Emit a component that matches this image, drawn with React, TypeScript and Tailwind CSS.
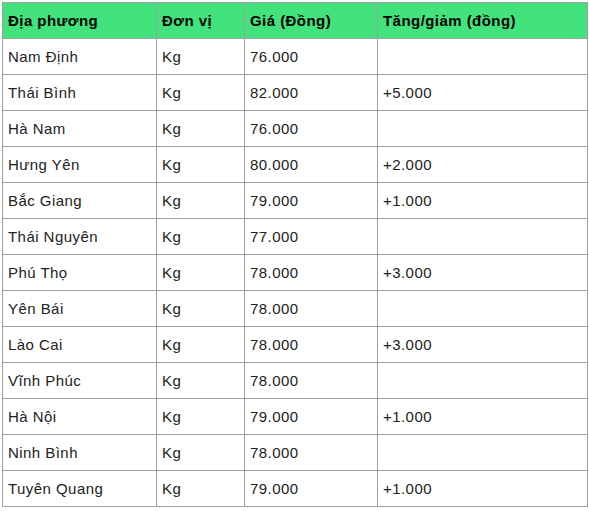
import React from "react";

const rows: [string, string, string, string][] = [
  ["Nam Định", "Kg", "76.000", ""],
  ["Thái Bình", "Kg", "82.000", "+5.000"],
  ["Hà Nam", "Kg", "76.000", ""],
  ["Hưng Yên", "Kg", "80.000", "+2.000"],
  ["Bắc Giang", "Kg", "79.000", "+1.000"],
  ["Thái Nguyên", "Kg", "77.000", ""],
  ["Phú Thọ", "Kg", "78.000", "+3.000"],
  ["Yên Bái", "Kg", "78.000", ""],
  ["Lào Cai", "Kg", "78.000", "+3.000"],
  ["Vĩnh Phúc", "Kg", "78.000", ""],
  ["Hà Nội", "Kg", "79.000", "+1.000"],
  ["Ninh Bình", "Kg", "78.000", ""],
  ["Tuyên Quang", "Kg", "79.000", "+1.000"],
];

export default function App() {
  const cell = "border border-[#a0a0a0] h-[36px] pl-[5px] pr-[6px] pt-[1px] pb-0 align-middle text-left";
  return (
    <div className="pt-[2px] pl-[2px] bg-white" style={{ fontFamily: '"Liberation Sans", Arial, sans-serif' }}>
      <table className="border-collapse table-fixed w-[585px] text-[15px] tracking-[0.45px] text-[#222]">
        <colgroup>
          <col className="w-[154px]" />
          <col className="w-[88px]" />
          <col className="w-[133px]" />
          <col className="w-[210px]" />
        </colgroup>
        <thead>
          <tr className="bg-[#42e37c]">
            <th className={`${cell} font-bold text-black`}>Địa phương</th>
            <th className={`${cell} font-bold text-black`}>Đơn vị</th>
            <th className={`${cell} font-bold text-black`}>Giá (Đồng)</th>
            <th className={`${cell} font-bold text-black`}>Tăng/giảm (đồng)</th>
          </tr>
        </thead>
        <tbody>
          {rows.map((r, i) => (
            <tr key={i}>
              <td className={cell}>{r[0]}</td>
              <td className={cell}>{r[1]}</td>
              <td className={cell}>{r[2]}</td>
              <td className={cell}>{r[3]}</td>
            </tr>
          ))}
        </tbody>
      </table>
    </div>
  );
}
